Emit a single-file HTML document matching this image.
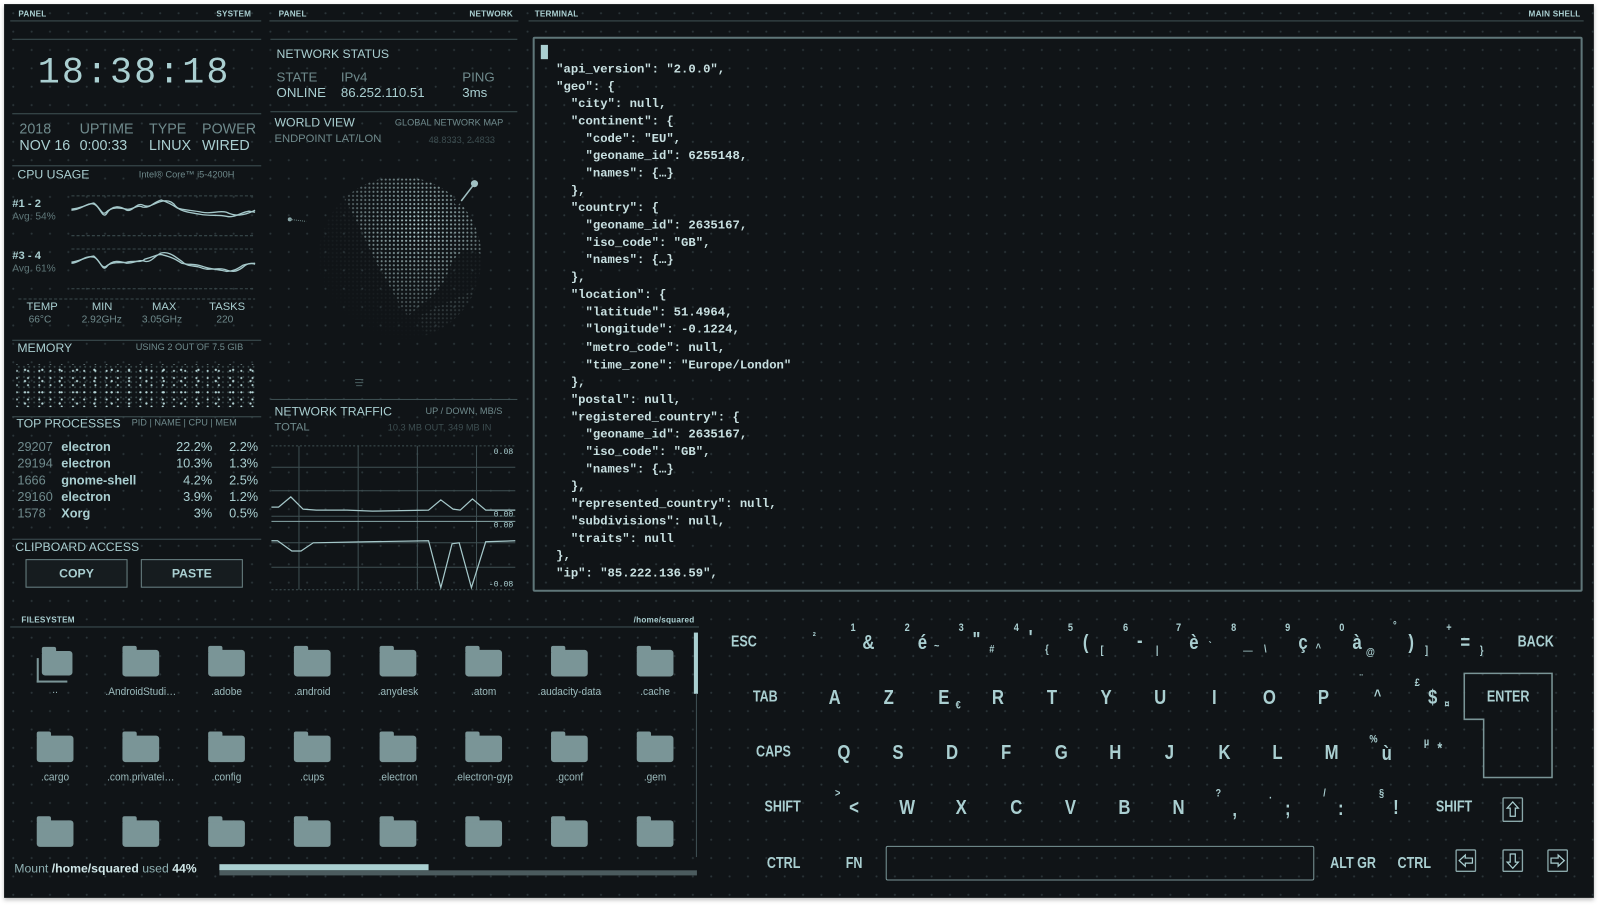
<!DOCTYPE html>
<html><head><meta charset="utf-8">
<style>
html,body{margin:0;padding:0;background:#fff;width:1600px;height:905px;overflow:hidden}
#w{position:absolute;left:0;top:0;width:1568px;height:887px;transform:scale(1.0204,1.0203);transform-origin:0 0}
#bg{position:absolute;left:4px;top:4px;width:1558px;height:876px;background-color:#101417;
background-image:radial-gradient(circle,#2a3438 0.8px,transparent 1.2px);background-size:18px 18px;box-shadow:0 2px 4px rgba(0,0,0,.25)}
.t{position:absolute;white-space:nowrap;font-family:"Liberation Sans",sans-serif;color:#aacfd1;line-height:1}
.m{font-family:"Liberation Mono",monospace}
.d{color:#6f8a8c}.dd{color:#4b5f62}
.h{font-size:8px;font-weight:bold;letter-spacing:.2px}
.ln{position:absolute;height:1px;background:#3f5154}
.k{position:absolute;font-family:"Liberation Sans",sans-serif;color:#aacfd1;line-height:1;white-space:nowrap;transform:translate(-50%,-50%) scaleX(.82)}
.kf{font-size:15px;font-weight:bold}.kl{font-size:20px;font-weight:bold}.ks{font-size:11px;font-weight:bold}
.fold{position:absolute;width:36px;height:26px;background:#7a9597;border-radius:3px}
.fold:before{content:"";position:absolute;left:0;top:-4px;width:14px;height:6px;background:#7a9597;border-radius:2px 2px 0 0}
.fl{position:absolute;font-family:"Liberation Sans",sans-serif;font-size:11px;color:#9bbabc;transform:translateX(-50%) scaleX(.9);white-space:nowrap}
</style></head><body>
<div id="w">
<div id="bg"></div>

<!-- LEFT PANEL -->
<div class="t h" style="left:18px;top:10px">PANEL</div>
<div class="t h" style="left:212px;top:10px">SYSTEM</div>
<div class="ln" style="left:10px;top:20px;width:246px"></div>
<div class="ln" style="left:12px;top:38px;width:244px"></div>
<div class="t m" style="left:37px;top:54px;font-size:36px;letter-spacing:2px">18:38:18</div>
<div class="ln" style="left:12px;top:111px;width:244px"></div>
<div class="t d" style="left:19px;top:119px;font-size:14px">2018</div>
<div class="t d" style="left:78px;top:119px;font-size:14px">UPTIME</div>
<div class="t d" style="left:146px;top:119px;font-size:14px">TYPE</div>
<div class="t d" style="left:198px;top:119px;font-size:14px">POWER</div>
<div class="t" style="left:19px;top:135px;font-size:14px">NOV 16</div>
<div class="t" style="left:78px;top:135px;font-size:14px">0:00:33</div>
<div class="t" style="left:146px;top:135px;font-size:14px">LINUX</div>
<div class="t" style="left:198px;top:135px;font-size:14px">WIRED</div>
<div class="ln" style="left:12px;top:162px;width:244px"></div>
<div class="t" style="left:17px;top:165px;font-size:12px">CPU USAGE</div>
<div class="t d" style="left:136px;top:167px;font-size:9px">Intel® Core™ i5-4200H</div>
<div class="t" style="left:12px;top:195px;font-size:11px;font-weight:bold">#1 - 2</div>
<div class="t" style="left:12px;top:208px;font-size:10px;color:#5f7779">Avg. 54%</div>
<div class="t" style="left:12px;top:246px;font-size:11px;font-weight:bold">#3 - 4</div>
<div class="t" style="left:12px;top:259px;font-size:10px;color:#5f7779">Avg. 61%</div>
<svg style="position:absolute;left:0;top:0" width="520" height="600">
<g stroke="#3a4a4d" stroke-dasharray="3,2" stroke-width="1">
<line x1="70" y1="192" x2="250" y2="192"/><line x1="70" y1="231" x2="250" y2="231"/>
<line x1="70" y1="244" x2="250" y2="244"/><line x1="70" y1="283" x2="250" y2="283"/>
<line x1="18" y1="293" x2="250" y2="293"/>
</g>
<g fill="none" stroke="#a5c8ca" stroke-width="1.3">
<path d="M70 206 C80 206 85 198 92 200 C98 202 100 214 104 210 C110 200 118 202 124 206 C130 208 134 198 140 201 C146 204 150 200 156 198 C162 196 168 196 172 202 C178 208 186 208 196 210 C206 212 214 210 222 212 C230 214 236 208 244 207 L250 208"/>
<path d="M70 205 C80 204 86 200 92 199 C98 203 100 212 104 208 C110 202 118 204 124 205 C130 206 134 200 140 203 C148 204 150 198 158 196 C164 198 168 200 174 204 C180 206 188 206 198 208 C208 210 214 206 222 208 C230 212 238 212 250 206"/>
<path d="M70 258 C78 258 82 250 92 252 C98 254 100 266 104 262 C110 254 118 256 124 258 C132 258 136 254 142 256 C148 258 152 250 158 248 C166 246 172 252 178 256 C184 262 190 260 196 262 C204 266 212 262 220 264 C226 266 230 268 238 262 C242 258 246 258 250 258"/>
<path d="M70 257 C78 256 84 252 92 251 C98 256 100 264 104 261 C110 256 118 258 124 257 C132 255 138 258 142 254 C150 252 156 248 160 250 C168 252 172 254 178 258 C186 260 190 258 198 261 C206 264 214 264 222 266 C228 266 232 264 238 260 C244 258 248 258 250 259"/>
</g>
</svg>
<div class="t" style="left:26px;top:296px;font-size:11px">TEMP</div>
<div class="t" style="left:90px;top:296px;font-size:11px">MIN</div>
<div class="t" style="left:149px;top:296px;font-size:11px">MAX</div>
<div class="t" style="left:205px;top:296px;font-size:11px">TASKS</div>
<div class="t d" style="left:28px;top:309px;font-size:10px">66°C</div>
<div class="t d" style="left:80px;top:309px;font-size:10px">2.92GHz</div>
<div class="t d" style="left:139px;top:309px;font-size:10px">3.05GHz</div>
<div class="t d" style="left:212px;top:309px;font-size:10px">220</div>
<div class="ln" style="left:12px;top:333px;width:244px"></div>
<div class="t" style="left:17px;top:335px;font-size:12px">MEMORY</div>
<div class="t d" style="left:133px;top:336px;font-size:9px">USING 2 OUT OF 7.5 GIB</div>
<div style="position:absolute;left:16px;top:357px;width:235px;height:42px;background-image:radial-gradient(circle,#b8d8da 0.9px,transparent 1.3px),radial-gradient(circle,#b8d8da 0.8px,transparent 1.2px),radial-gradient(circle,#3a4a4c 0.7px,transparent 1.1px);background-size:17px 11px,11px 7px,5px 5px;background-position:0 0,6px 3px,0 0"></div>
<div class="ln" style="left:12px;top:408px;width:244px"></div>
<div class="t" style="left:16px;top:409px;font-size:12px">TOP PROCESSES</div>
<div class="t d" style="left:129px;top:410px;font-size:9px">PID | NAME | CPU | MEM</div>
<div style="position:absolute;left:17px;top:430px;width:236px;font-family:'Liberation Sans',sans-serif;font-size:12.5px;color:#aacfd1;line-height:16.3px">
<div style="position:relative;height:16.3px"><span class="d" style="position:absolute;left:0">29207</span><span style="position:absolute;left:43px;font-weight:bold">electron</span><span style="position:absolute;right:45px">22.2%</span><span style="position:absolute;right:0">2.2%</span></div>
<div style="position:relative;height:16.3px"><span class="d" style="position:absolute;left:0">29194</span><span style="position:absolute;left:43px;font-weight:bold">electron</span><span style="position:absolute;right:45px">10.3%</span><span style="position:absolute;right:0">1.3%</span></div>
<div style="position:relative;height:16.3px"><span class="d" style="position:absolute;left:0">1666</span><span style="position:absolute;left:43px;font-weight:bold">gnome-shell</span><span style="position:absolute;right:45px">4.2%</span><span style="position:absolute;right:0">2.5%</span></div>
<div style="position:relative;height:16.3px"><span class="d" style="position:absolute;left:0">29160</span><span style="position:absolute;left:43px;font-weight:bold">electron</span><span style="position:absolute;right:45px">3.9%</span><span style="position:absolute;right:0">1.2%</span></div>
<div style="position:relative;height:16.3px"><span class="d" style="position:absolute;left:0">1578</span><span style="position:absolute;left:43px;font-weight:bold">Xorg</span><span style="position:absolute;right:45px">3%</span><span style="position:absolute;right:0">0.5%</span></div>
</div>
<div class="ln" style="left:12px;top:528px;width:244px"></div>
<div class="t" style="left:15px;top:530px;font-size:12px">CLIPBOARD ACCESS</div>
<div style="position:absolute;left:25px;top:548px;width:98px;height:26px;border:1px solid #6a8284;background:#161c1f;color:#aacfd1;font:bold 12px 'Liberation Sans',sans-serif;text-align:center;line-height:26px">COPY</div>
<div style="position:absolute;left:138px;top:548px;width:98px;height:26px;border:1px solid #6a8284;background:#161c1f;color:#aacfd1;font:bold 12px 'Liberation Sans',sans-serif;text-align:center;line-height:26px">PASTE</div>

<!-- NETWORK PANEL -->
<div class="t h" style="left:273px;top:10px">PANEL</div>
<div class="t h" style="left:460px;top:10px">NETWORK</div>
<div class="ln" style="left:264px;top:20px;width:244px"></div>
<div class="ln" style="left:265px;top:38px;width:242px"></div>
<div class="t" style="left:271px;top:47px;font-size:12px">NETWORK STATUS</div>
<div class="t d" style="left:271px;top:69px;font-size:13px">STATE</div>
<div class="t d" style="left:334px;top:69px;font-size:13px">IPv4</div>
<div class="t d" style="left:453px;top:69px;font-size:13px">PING</div>
<div class="t" style="left:271px;top:84px;font-size:13px">ONLINE</div>
<div class="t" style="left:334px;top:84px;font-size:13px">86.252.110.51</div>
<div class="t" style="left:453px;top:84px;font-size:13px">3ms</div>
<div class="ln" style="left:265px;top:109px;width:242px"></div>
<div class="t" style="left:269px;top:114px;font-size:12px">WORLD VIEW</div>
<div class="t d" style="left:387px;top:116px;font-size:9px">GLOBAL NETWORK MAP</div>
<div class="t d" style="left:269px;top:131px;font-size:11px">ENDPOINT LAT/LON</div>
<div class="t" style="left:420px;top:133px;font-size:9px;color:#3d4e51">48.8333, 2.4833</div>
<svg style="position:absolute;left:260px;top:150px" width="260" height="250">
<defs>
<pattern id="pd" width="4" height="4" patternUnits="userSpaceOnUse"><circle cx="2" cy="2" r="1" fill="#b8d6d8"/></pattern>
<radialGradient id="gm" cx="0.62" cy="0.3" r="0.75"><stop offset="0" stop-color="#fff" stop-opacity="1"/><stop offset="0.55" stop-color="#fff" stop-opacity="0.45"/><stop offset="1" stop-color="#fff" stop-opacity="0"/></radialGradient>
<mask id="mk"><circle cx="132" cy="103" r="80" fill="url(#gm)"/></mask>
</defs>
<g mask="url(#mk)">
<path d="M75 40 C110 15 175 18 205 52 C216 70 218 90 212 100 C200 90 185 95 178 120 C170 140 150 150 140 160 C130 150 120 125 110 110 C100 90 92 70 75 40 Z" fill="url(#pd)"/>
<path d="M150 160 C170 150 190 140 212 132 C205 160 185 182 160 190 Z" fill="url(#pd)" opacity=".7"/>
<circle cx="132" cy="103" r="80" fill="url(#pd)" opacity=".15"/>
</g>
<circle cx="188" cy="48" r="3" fill="#101417"/>
<line x1="192" y1="47" x2="205" y2="30" stroke="#a0c0c2" stroke-width="1.5"/>
<circle cx="205" cy="30" r="3.5" fill="#a0c0c2"/>
<circle cx="24" cy="65" r="2" fill="#8aa8aa"/><line x1="24" y1="65" x2="40" y2="67" stroke="#6a8484" stroke-dasharray="1,1"/>
<g stroke="#4a5e60"><line x1="88" y1="222" x2="96" y2="222"/><line x1="88" y1="225" x2="96" y2="225"/><line x1="89" y1="228" x2="95" y2="228"/></g>
</svg>
<div class="ln" style="left:265px;top:391px;width:242px"></div>
<div class="t" style="left:269px;top:397px;font-size:12px">NETWORK TRAFFIC</div>
<div class="t d" style="left:417px;top:399px;font-size:9px">UP / DOWN, MB/S</div>
<div class="t d" style="left:269px;top:414px;font-size:11px">TOTAL</div>
<div class="t" style="left:380px;top:415px;font-size:9px;color:#3d4e51">10.3 MB OUT, 349 MB IN</div>
<svg style="position:absolute;left:0;top:0" width="520" height="600">
<g stroke="#3f5053" stroke-width="1">
<line x1="266" y1="437" x2="505" y2="437" stroke-dasharray="2,2"/>
<line x1="266" y1="458" x2="505" y2="458"/><line x1="266" y1="481" x2="505" y2="481"/>
<line x1="266" y1="506" x2="505" y2="506"/>
<line x1="266" y1="532" x2="505" y2="532"/><line x1="266" y1="556" x2="505" y2="556"/>
<line x1="266" y1="578" x2="505" y2="578" stroke-dasharray="2,2"/>
<line x1="293" y1="437" x2="293" y2="578"/><line x1="351" y1="437" x2="351" y2="578"/>
<line x1="409" y1="437" x2="409" y2="578"/><line x1="467" y1="437" x2="467" y2="578"/>
</g>
<line x1="266" y1="511" x2="505" y2="511" stroke="#8aa8aa"/>
<path d="M266 497 L273 497 L285 487 L297 499 L310 500 L340 500 L365 501 L420 500 L432 490 L444 499 L451 500 L463 489 L476 500 L505 500" fill="none" stroke="#a5c8ca" stroke-width="1.2"/>
<path d="M266 530 L272 530 L286 540 L295 540 L307 532 L360 531 L420 530 L432 576 L443 533 L450 532 L462 576 L476 531 L505 530" fill="none" stroke="#a5c8ca" stroke-width="1.2"/>
<g font-family="Liberation Mono,monospace" font-size="8" fill="#aacfd1" text-anchor="end">
<text x="503" y="445">0.08</text><text x="503" y="506">0.00</text><text x="503" y="517">0.00</text><text x="503" y="575">-0.08</text>
</g>
</svg>

<!-- TERMINAL -->
<div class="t h" style="left:524px;top:10px">TERMINAL</div>
<div class="t h" style="left:1498px;top:10px">MAIN SHELL</div>
<div class="ln" style="left:518px;top:20px;width:1034px"></div>
<div style="position:absolute;left:522px;top:36px;width:1025px;height:540px;border:2px solid #5f7679;border-radius:2px"></div>
<div style="position:absolute;left:530px;top:44px;width:7px;height:14px;background:#aacfd1"></div>
<pre style="position:absolute;left:545px;top:60px;margin:0;font-family:'Liberation Mono',monospace;font-size:12px;line-height:17.03px;color:#c8e0e1;font-weight:bold">"api_version": "2.0.0",
"geo": {
  "city": null,
  "continent": {
    "code": "EU",
    "geoname_id": 6255148,
    "names": {…}
  },
  "country": {
    "geoname_id": 2635167,
    "iso_code": "GB",
    "names": {…}
  },
  "location": {
    "latitude": 51.4964,
    "longitude": -0.1224,
    "metro_code": null,
    "time_zone": "Europe/London"
  },
  "postal": null,
  "registered_country": {
    "geoname_id": 2635167,
    "iso_code": "GB",
    "names": {…}
  },
  "represented_country": null,
  "subdivisions": null,
  "traits": null
},
"ip": "85.222.136.59",</pre>

<!-- FILESYSTEM -->
<div class="t h" style="left:21px;top:604px">FILESYSTEM</div>
<div class="t h" style="left:621px;top:604px">/home/squared</div>
<div class="ln" style="left:10px;top:614px;width:675px"></div>
<div style="position:absolute;left:680px;top:620px;width:4px;height:60px;background:#aacfd1"></div>
<div style="position:absolute;left:682px;top:680px;width:1px;height:160px;background:#3f5154"></div>
<div class="fold" style="left:41px;top:638px;width:30px;height:24px"></div>
<div style="position:absolute;left:36px;top:645px;height:22px;border-left:2px solid #7a9597;border-bottom:2px solid #7a9597;width:28px"></div>
<div class="fl" style="left:54px;top:670px">..</div>
<div class="fold" style="left:120px;top:637px"></div><div class="fl" style="left:138px;top:672px">.AndroidStudi…</div>
<div class="fold" style="left:204px;top:637px"></div><div class="fl" style="left:222px;top:672px">.adobe</div>
<div class="fold" style="left:288px;top:637px"></div><div class="fl" style="left:306px;top:672px">.android</div>
<div class="fold" style="left:372px;top:637px"></div><div class="fl" style="left:390px;top:672px">.anydesk</div>
<div class="fold" style="left:456px;top:637px"></div><div class="fl" style="left:474px;top:672px">.atom</div>
<div class="fold" style="left:540px;top:637px"></div><div class="fl" style="left:558px;top:672px">.audacity-data</div>
<div class="fold" style="left:624px;top:637px"></div><div class="fl" style="left:642px;top:672px">.cache</div>
<div class="fold" style="left:36px;top:721px"></div><div class="fl" style="left:54px;top:756px">.cargo</div>
<div class="fold" style="left:120px;top:721px"></div><div class="fl" style="left:138px;top:756px">.com.privatei…</div>
<div class="fold" style="left:204px;top:721px"></div><div class="fl" style="left:222px;top:756px">.config</div>
<div class="fold" style="left:288px;top:721px"></div><div class="fl" style="left:306px;top:756px">.cups</div>
<div class="fold" style="left:372px;top:721px"></div><div class="fl" style="left:390px;top:756px">.electron</div>
<div class="fold" style="left:456px;top:721px"></div><div class="fl" style="left:474px;top:756px">.electron-gyp</div>
<div class="fold" style="left:540px;top:721px"></div><div class="fl" style="left:558px;top:756px">.gconf</div>
<div class="fold" style="left:624px;top:721px"></div><div class="fl" style="left:642px;top:756px">.gem</div>
<div class="fold" style="left:36px;top:804px"></div>
<div class="fold" style="left:120px;top:804px"></div>
<div class="fold" style="left:204px;top:804px"></div>
<div class="fold" style="left:288px;top:804px"></div>
<div class="fold" style="left:372px;top:804px"></div>
<div class="fold" style="left:456px;top:804px"></div>
<div class="fold" style="left:540px;top:804px"></div>
<div class="fold" style="left:624px;top:804px"></div>
<div class="t" style="left:14px;top:845px;font-size:12px;color:#8fb0b2">Mount <span style="color:#cfe6e7;font-weight:bold">/home/squared</span> used <span style="color:#cfe6e7;font-weight:bold">44%</span></div>
<div style="position:absolute;left:215px;top:847px;width:205px;height:6px;background:#aacfd1"></div>
<div style="position:absolute;left:215px;top:853px;width:468px;height:5px;background:#4b5b5e"></div>

<!-- KEYBOARD -->
<div class="k kf" style="left:729px;top:629px">ESC</div>
<div class="k ks" style="left:798px;top:625px">²</div>
<div class="k ks" style="left:836px;top:616px">1</div><div class="k kl" style="left:851px;top:630px">&amp;</div>
<div class="k ks" style="left:889px;top:616px">2</div><div class="k kl" style="left:904px;top:630px">é</div><div class="k ks" style="left:918px;top:634px">~</div>
<div class="k ks" style="left:942px;top:616px">3</div><div class="k kl" style="left:957px;top:627px">"</div><div class="k ks" style="left:972px;top:637px">#</div>
<div class="k ks" style="left:996px;top:616px">4</div><div class="k kl" style="left:1010px;top:625px">'</div><div class="k ks" style="left:1026px;top:637px">{</div>
<div class="k ks" style="left:1049px;top:616px">5</div><div class="k kl" style="left:1064px;top:630px">(</div><div class="k ks" style="left:1080px;top:638px">[</div>
<div class="k ks" style="left:1103px;top:616px">6</div><div class="k kl" style="left:1117px;top:628px">-</div><div class="k ks" style="left:1134px;top:638px">|</div>
<div class="k ks" style="left:1155px;top:616px">7</div><div class="k kl" style="left:1170px;top:630px">è</div><div class="k ks" style="left:1186px;top:634px">`</div>
<div class="k ks" style="left:1209px;top:616px">8</div><div class="k kl" style="left:1223px;top:630px">_</div><div class="k ks" style="left:1240px;top:637px">\</div>
<div class="k ks" style="left:1262px;top:616px">9</div><div class="k kl" style="left:1277px;top:630px">ç</div><div class="k ks" style="left:1292px;top:636px">^</div>
<div class="k ks" style="left:1315px;top:616px">0</div><div class="k kl" style="left:1330px;top:630px">à</div><div class="k ks" style="left:1343px;top:640px">@</div>
<div class="k ks" style="left:1367px;top:614px">°</div><div class="k kl" style="left:1383px;top:630px">)</div><div class="k ks" style="left:1398px;top:638px">]</div>
<div class="k ks" style="left:1420px;top:616px">+</div><div class="k kl" style="left:1436px;top:630px">=</div><div class="k ks" style="left:1452px;top:638px">}</div>
<div class="k kf" style="left:1505px;top:629px">BACK</div>

<div class="k kf" style="left:750px;top:683px">TAB</div>
<div class="k kl" style="left:818px;top:684px">A</div>
<div class="k kl" style="left:871px;top:684px">Z</div>
<div class="k kl" style="left:925px;top:684px">E</div><div class="k ks" style="left:939px;top:692px">€</div>
<div class="k kl" style="left:978px;top:684px">R</div>
<div class="k kl" style="left:1031px;top:684px">T</div>
<div class="k kl" style="left:1084px;top:684px">Y</div>
<div class="k kl" style="left:1137px;top:684px">U</div>
<div class="k kl" style="left:1190px;top:684px">I</div>
<div class="k kl" style="left:1244px;top:684px">O</div>
<div class="k kl" style="left:1297px;top:684px">P</div>
<div class="k ks" style="left:1334px;top:666px">¨</div><div class="k kf" style="left:1350px;top:682px">^</div>
<div class="k ks" style="left:1389px;top:670px">£</div><div class="k kl" style="left:1404px;top:684px">$</div><div class="k ks" style="left:1418px;top:691px">¤</div>
<svg style="position:absolute;left:1433px;top:659px" width="92" height="106"><path d="M2 1 H88 V103 H21 V46 H2 Z" fill="none" stroke="#7a9597" stroke-width="1.5"/></svg>
<div class="k kf" style="left:1478px;top:683px">ENTER</div>

<div class="k kf" style="left:758px;top:737px">CAPS</div>
<div class="k kl" style="left:827px;top:738px">Q</div>
<div class="k kl" style="left:880px;top:738px">S</div>
<div class="k kl" style="left:933px;top:738px">D</div>
<div class="k kl" style="left:986px;top:738px">F</div>
<div class="k kl" style="left:1040px;top:738px">G</div>
<div class="k kl" style="left:1093px;top:738px">H</div>
<div class="k kl" style="left:1146px;top:738px">J</div>
<div class="k kl" style="left:1200px;top:738px">K</div>
<div class="k kl" style="left:1252px;top:738px">L</div>
<div class="k kl" style="left:1305px;top:738px">M</div>
<div class="k ks" style="left:1346px;top:725px">%</div><div class="k kl" style="left:1359px;top:739px">ù</div>
<div class="k ks" style="left:1398px;top:728px">µ</div><div class="k kf" style="left:1411px;top:734px">*</div>

<div class="k kf" style="left:767px;top:791px">SHIFT</div>
<div class="k ks" style="left:821px;top:778px">&gt;</div><div class="k kl" style="left:837px;top:792px">&lt;</div>
<div class="k kl" style="left:889px;top:792px">W</div>
<div class="k kl" style="left:942px;top:792px">X</div>
<div class="k kl" style="left:996px;top:792px">C</div>
<div class="k kl" style="left:1049px;top:792px">V</div>
<div class="k kl" style="left:1102px;top:792px">B</div>
<div class="k kl" style="left:1155px;top:792px">N</div>
<div class="k ks" style="left:1194px;top:778px">?</div><div class="k kl" style="left:1210px;top:794px">,</div>
<div class="k ks" style="left:1245px;top:780px">.</div><div class="k kl" style="left:1262px;top:793px">;</div>
<div class="k ks" style="left:1298px;top:778px">/</div><div class="k kl" style="left:1314px;top:793px">:</div>
<div class="k ks" style="left:1354px;top:778px">§</div><div class="k kl" style="left:1368px;top:792px">!</div>
<div class="k kf" style="left:1425px;top:791px">SHIFT</div>
<svg style="position:absolute;left:1472px;top:781px" width="22" height="26"><rect x="1" y="1" width="19" height="23" rx="1" fill="none" stroke="#8aa8aa" stroke-width="1.3"/><path d="M10.5 5 L16 11 H13 V19 H8 V11 H5 Z" fill="none" stroke="#aacfd1" stroke-width="1.2"/></svg>

<div class="k kf" style="left:768px;top:846px">CTRL</div>
<div class="k kf" style="left:837px;top:846px">FN</div>
<div style="position:absolute;left:868px;top:829px;width:418px;height:32px;border:1.5px solid #7a9597;border-radius:2px"></div>
<div class="k kf" style="left:1326px;top:846px">ALT GR</div>
<div class="k kf" style="left:1386px;top:846px">CTRL</div>
<svg style="position:absolute;left:1426px;top:832px" width="22" height="24"><rect x="1" y="1" width="19" height="21" rx="1" fill="none" stroke="#8aa8aa" stroke-width="1.3"/><path d="M4 11.5 L10 6 V9 H17 V14 H10 V17 Z" fill="none" stroke="#aacfd1" stroke-width="1.2"/></svg>
<svg style="position:absolute;left:1472px;top:832px" width="22" height="24"><rect x="1" y="1" width="19" height="21" rx="1" fill="none" stroke="#8aa8aa" stroke-width="1.3"/><path d="M10.5 19 L16 13 H13 V5 H8 V13 H5 Z" fill="none" stroke="#aacfd1" stroke-width="1.2"/></svg>
<svg style="position:absolute;left:1516px;top:832px" width="22" height="24"><rect x="1" y="1" width="19" height="21" rx="1" fill="none" stroke="#8aa8aa" stroke-width="1.3"/><path d="M17 11.5 L11 6 V9 H4 V14 H11 V17 Z" fill="none" stroke="#aacfd1" stroke-width="1.2"/></svg>
</div>
</body></html>
